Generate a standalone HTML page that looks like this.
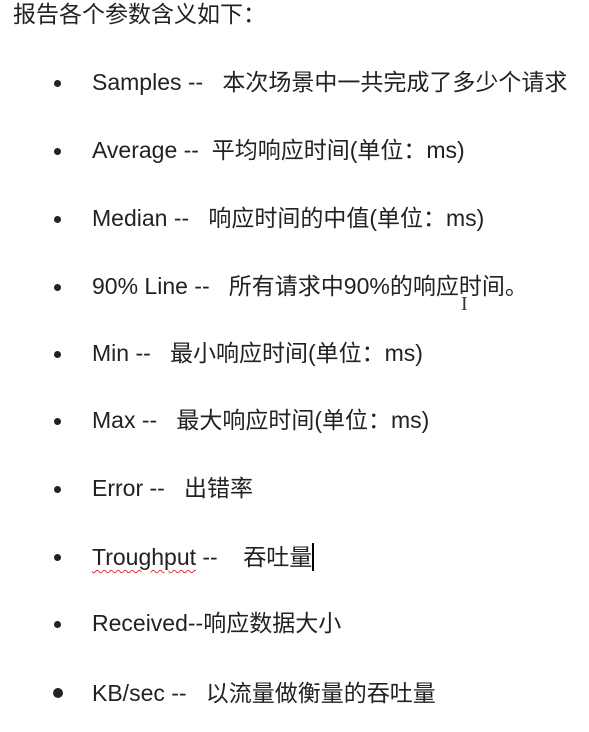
<!DOCTYPE html>
<html><head><meta charset="utf-8"><style>
html,body{margin:0;padding:0;background:#fff;}
body{width:589px;height:732px;position:relative;overflow:hidden;font-family:"Liberation Sans","Noto Sans CJK SC",sans-serif;color:#222;font-size:23px;}
.t{position:absolute;left:13px;top:1px;white-space:pre;line-height:26px;}
.r{position:absolute;left:92px;white-space:pre;line-height:26px;}
.b{position:absolute;left:54px;width:7px;height:7px;border-radius:50%;background:#222;}
.w{text-decoration:underline wavy #d33;text-decoration-thickness:1px;text-underline-offset:4px;}
.cur{display:inline-block;width:2px;height:28px;background:#000;vertical-align:-6px;}
</style></head><body>
<div class="t">报告各个参数含义如下：</div>
<div class="b" style="top:80px"></div><div class="r" style="top:69px">Samples --   本次场景中一共完成了多少个请求</div>
<div class="b" style="top:148px"></div><div class="r" style="top:137px">Average --  平均响应时间(单位：ms)</div>
<div class="b" style="top:216px"></div><div class="r" style="top:205px">Median --   响应时间的中值(单位：ms)</div>
<div class="b" style="top:284px"></div><div class="r" style="top:273px">90% Line --   所有请求中90%的响应时间。</div>
<div class="b" style="top:351px"></div><div class="r" style="top:340px">Min --   最小响应时间(单位：ms)</div>
<div class="b" style="top:418px"></div><div class="r" style="top:407px">Max --   最大响应时间(单位：ms)</div>
<div class="b" style="top:486px"></div><div class="r" style="top:475px">Error --   出错率</div>
<div class="b" style="top:554px"></div><div class="r" style="top:543px"><span class="w">Troughput</span> --    吞吐量<span class="cur"></span></div>
<div class="b" style="top:621px"></div><div class="r" style="top:610px">Received--响应数据大小</div>
<div class="b" style="top:688px;left:53px;width:10px;height:10px"></div><div class="r" style="top:680px">KB/sec --   以流量做衡量的吞吐量</div>
<div style="position:absolute;left:461px;top:293px;font-size:20px;color:#333;font-family:'Liberation Serif',serif">I</div>
</body></html>
